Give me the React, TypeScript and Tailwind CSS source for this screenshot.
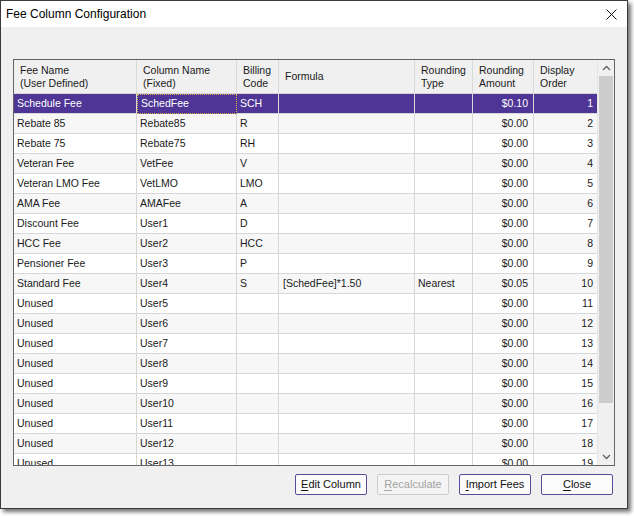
import React from 'react';

type Row = {
  fee: string;
  column: string;
  code: string;
  formula: string;
  rounding: string;
  amount: string;
  order: number;
};

const rows: Row[] = [
  { fee: 'Schedule Fee', column: 'SchedFee', code: 'SCH', formula: '', rounding: '', amount: '$0.10', order: 1 },
  { fee: 'Rebate 85', column: 'Rebate85', code: 'R', formula: '', rounding: '', amount: '$0.00', order: 2 },
  { fee: 'Rebate 75', column: 'Rebate75', code: 'RH', formula: '', rounding: '', amount: '$0.00', order: 3 },
  { fee: 'Veteran Fee', column: 'VetFee', code: 'V', formula: '', rounding: '', amount: '$0.00', order: 4 },
  { fee: 'Veteran LMO Fee', column: 'VetLMO', code: 'LMO', formula: '', rounding: '', amount: '$0.00', order: 5 },
  { fee: 'AMA Fee', column: 'AMAFee', code: 'A', formula: '', rounding: '', amount: '$0.00', order: 6 },
  { fee: 'Discount Fee', column: 'User1', code: 'D', formula: '', rounding: '', amount: '$0.00', order: 7 },
  { fee: 'HCC Fee', column: 'User2', code: 'HCC', formula: '', rounding: '', amount: '$0.00', order: 8 },
  { fee: 'Pensioner Fee', column: 'User3', code: 'P', formula: '', rounding: '', amount: '$0.00', order: 9 },
  { fee: 'Standard Fee', column: 'User4', code: 'S', formula: '[SchedFee]*1.50', rounding: 'Nearest', amount: '$0.05', order: 10 },
  ...[5, 6, 7, 8, 9, 10, 11, 12, 13].map((n, i) => ({
    fee: 'Unused',
    column: `User${n}`,
    code: '',
    formula: '',
    rounding: '',
    amount: '$0.00',
    order: 11 + i,
  })),
];

const cols = 'grid grid-cols-[123px_100px_42px_136px_58px_61px_63px]';

function HeaderCell({ lines }: { lines: string[] }) {
  return (
    <div className="flex flex-col justify-center border-r border-[#d9d9d9] pl-[6px] leading-[13px] last:border-r-0">
      {lines.map((l) => (
        <span key={l}>{l}</span>
      ))}
    </div>
  );
}

function Button({ label, hot, disabled }: { label: string; hot: string; disabled?: boolean }) {
  const rest = label.slice(1);
  return (
    <button
      disabled={disabled}
      className={`h-[21px] w-[72px] rounded-[2px] border text-[11px] leading-none ${
        disabled ? 'border-[#cccccc] bg-[#f4f4f4] text-[#a3a3a3]' : 'border-[#5a4a9c] bg-[#fbfbfb] text-[#111]'
      }`}
    >
      <span className="underline underline-offset-[2px]">{hot}</span>
      {rest}
    </button>
  );
}

export default function App() {
  return (
    <div className="h-[516px] w-[634px] bg-white font-['Liberation_Sans',Arial,sans-serif] text-[#1a1a1a]">
      <div className="flex h-[509px] w-[628px] flex-col border border-[#3a3a3a] bg-[#f0f0f0] shadow-[3px_3px_4px_rgba(0,0,0,0.55)]">
        {/* title bar */}
        <div className="flex h-[26px] shrink-0 items-center justify-between bg-white pl-[5px] pr-[10px]">
          <span className="text-[12px] text-black">Fee Column Configuration</span>
          <svg width="11" height="11" viewBox="0 0 11 11">
            <path d="M0.5 0.5L10.5 10.5M10.5 0.5L0.5 10.5" stroke="#111" strokeWidth="1" />
          </svg>
        </div>

        {/* grid */}
        <div className="ml-[12px] mt-[32px] flex h-[407px] w-[602px] border border-[#646464] bg-white text-[10.5px]">
          <div className="w-[583px] overflow-hidden">
            <div className={`${cols} h-[34px] border-b border-[#d5d5d5] bg-[#f0f0f0]`}>
              <HeaderCell lines={['Fee Name', '(User Defined)']} />
              <HeaderCell lines={['Column Name', '(Fixed)']} />
              <HeaderCell lines={['Billing', 'Code']} />
              <HeaderCell lines={['Formula']} />
              <HeaderCell lines={['Rounding', 'Type']} />
              <HeaderCell lines={['Rounding', 'Amount']} />
              <HeaderCell lines={['Display', 'Order']} />
            </div>
            {rows.map((r, i) => {
              const selected = i === 0;
              const bg = selected ? 'bg-[#4e3596] text-white' : i % 2 === 1 ? 'bg-[#f7f7f7]' : 'bg-white';
              const cell = `h-[20px] border-r border-b border-[#d7d7d7] flex items-center whitespace-nowrap`;
              return (
                <div key={r.order} className={`${cols} ${bg}`}>
                  <div className={`${cell} pl-[3px]`}>{r.fee}</div>
                  <div className={`${cell} pl-[3px] ${selected ? 'border-[1px] border-dotted border-[#d9b44a]' : ''}`}>
                    {r.column}
                  </div>
                  <div className={`${cell} pl-[3px]`}>{r.code}</div>
                  <div className={`${cell} pl-[4px]`}>{r.formula}</div>
                  <div className={`${cell} pl-[3px]`}>{r.rounding}</div>
                  <div className={`${cell} justify-end pr-[5px]`}>{r.amount}</div>
                  <div className={`${cell} justify-end border-r-0 pr-[4px]`}>{r.order}</div>
                </div>
              );
            })}
          </div>

          {/* scrollbar */}
          <div className="flex w-[17px] flex-col border-l border-[#e6e6e6] bg-[#f0f0f0]">
            <div className="flex h-[16px] shrink-0 items-center justify-center">
              <svg width="9" height="6" viewBox="0 0 9 6">
                <path d="M1 5L4.5 1.5L8 5" stroke="#606060" strokeWidth="1.3" fill="none" />
              </svg>
            </div>
            <div className="mx-[1px] h-[327px] bg-[#cdcdcd]" />
            <div className="flex-1" />
            <div className="flex h-[16px] shrink-0 items-center justify-center">
              <svg width="9" height="6" viewBox="0 0 9 6">
                <path d="M1 1L4.5 4.5L8 1" stroke="#606060" strokeWidth="1.3" fill="none" />
              </svg>
            </div>
          </div>
        </div>

        {/* buttons */}
        <div className="mr-[14px] mt-[8px] flex justify-end gap-[10px]">
          <Button hot="E" label="Edit Column" />
          <Button hot="R" label="Recalculate" disabled />
          <Button hot="I" label="Import Fees" />
          <Button hot="C" label="Close" />
        </div>
      </div>
    </div>
  );
}
